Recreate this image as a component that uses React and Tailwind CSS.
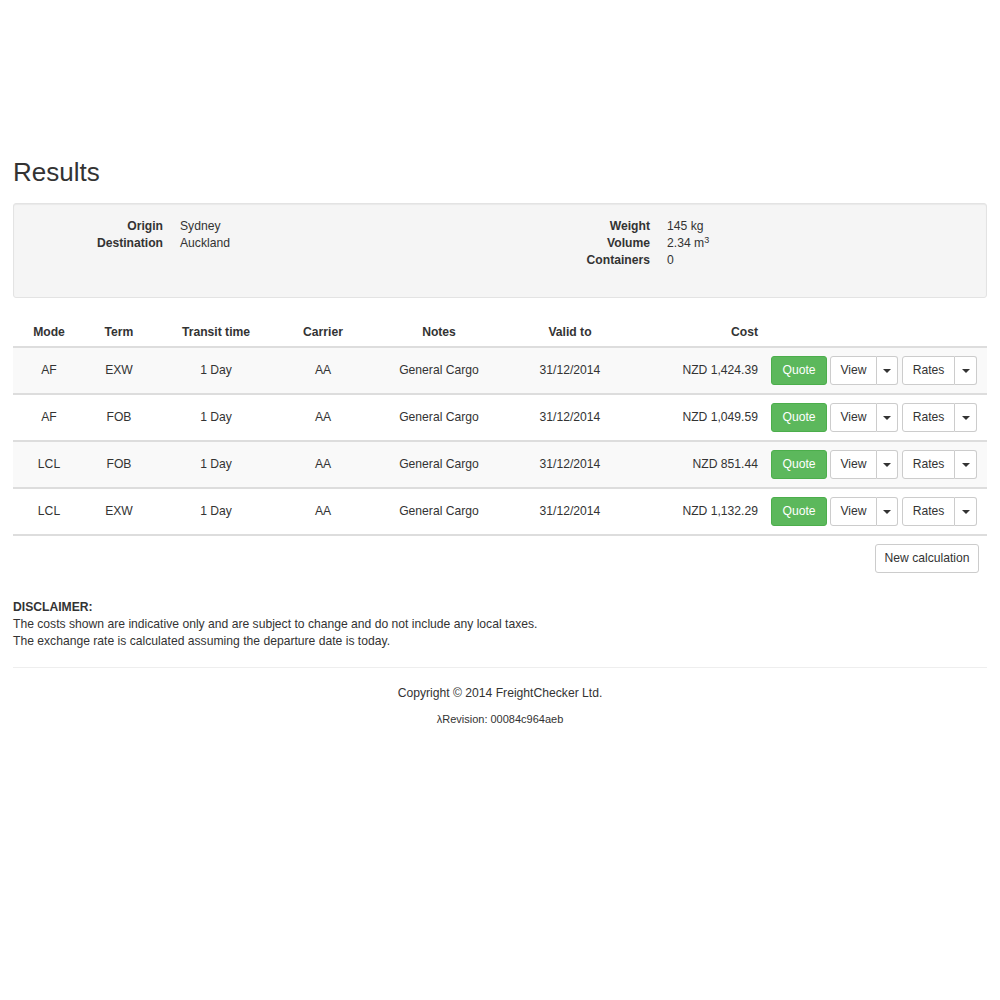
import React from "react";

const rows = [
  { mode: "AF", term: "EXW", cost: "NZD 1,424.39" },
  { mode: "AF", term: "FOB", cost: "NZD 1,049.59" },
  { mode: "LCL", term: "FOB", cost: "NZD 851.44" },
  { mode: "LCL", term: "EXW", cost: "NZD 1,132.29" },
];

const cols =
  "grid grid-cols-[72px_68px_126px_88px_144px_118px_136px_222px] items-center";

function Caret() {
  return (
    <span className="inline-block w-0 h-0 border-x-[4px] border-x-transparent border-t-[4px] border-t-[#333]" />
  );
}

function SplitButton({ label, mainW, caretW }) {
  return (
    <div className="flex h-[29px]">
      <button
        className={`${mainW} h-full bg-white border border-[#ccc] rounded-l-[3px] text-[12.15px] text-[#333]`}
      >
        {label}
      </button>
      <button
        className={`${caretW} h-full bg-white border border-l-0 border-[#ccc] rounded-r-[3px] flex items-center justify-center`}
      >
        <Caret />
      </button>
    </div>
  );
}

function InfoRow({ label, value }) {
  return (
    <div className="flex leading-[17px]">
      <div className="w-[137px] text-right font-bold">{label}</div>
      <div className="ml-[17px]">{value}</div>
    </div>
  );
}

export default function App() {
  return (
    <div className="min-h-[1000px] bg-white text-[#333] text-[12.15px] leading-[17px] font-['Liberation_Sans',Arial,sans-serif]">
      <div className="px-[13px] pt-[158px]">
        <h2 className="text-[26px] leading-[28px] font-normal mb-[17px]">Results</h2>

        <div className="bg-[#f5f5f5] border border-[#e3e3e3] rounded-[3px] shadow-[inset_0_1px_1px_rgba(0,0,0,0.05)] px-[12px] pt-[14px] pb-[28px] grid grid-cols-2 gap-[26px]">
          <div>
            <InfoRow label="Origin" value="Sydney" />
            <InfoRow label="Destination" value="Auckland" />
          </div>
          <div>
            <InfoRow label="Weight" value="145 kg" />
            <InfoRow
              label="Volume"
              value={
                <span>
                  2.34 m<sup className="text-[9px]">3</sup>
                </span>
              }
            />
            <InfoRow label="Containers" value="0" />
          </div>
        </div>

        <div className="mt-[17px]">
          <div className={`${cols} font-bold h-[33px] pt-[4px] border-b-2 border-[#ddd]`}>
            <div className="text-center">Mode</div>
            <div className="text-center">Term</div>
            <div className="text-center">Transit time</div>
            <div className="text-center">Carrier</div>
            <div className="text-center">Notes</div>
            <div className="text-center">Valid to</div>
            <div className="text-right pr-[7px]">Cost</div>
            <div />
          </div>
          {rows.map((r, i) => (
            <div
              key={i}
              className={`${cols} h-[47px] border-b-2 border-[#ddd] ${i % 2 === 0 ? "bg-[#f9f9f9]" : "bg-white"}`}
            >
              <div className="text-center">{r.mode}</div>
              <div className="text-center">{r.term}</div>
              <div className="text-center">1 Day</div>
              <div className="text-center">AA</div>
              <div className="text-center">General Cargo</div>
              <div className="text-center">31/12/2014</div>
              <div className="text-right pr-[7px]">{r.cost}</div>
              <div className="flex items-center gap-[3px] pl-[6px]">
                <button className="w-[56px] h-[29px] bg-[#5cb85c] border border-[#4cae4c] rounded-[3px] text-white text-[12.15px]">
                  Quote
                </button>
                <SplitButton label="View" mainW="w-[47px]" caretW="w-[21px]" />
                <div className="ml-[1px]">
                  <SplitButton label="Rates" mainW="w-[53px]" caretW="w-[22px]" />
                </div>
              </div>
            </div>
          ))}
          <div className="flex justify-end pr-[8px] mt-[8px]">
            <button className="w-[104px] h-[29px] bg-white border border-[#ccc] rounded-[3px] text-[12.15px] text-[#333]">
              New calculation
            </button>
          </div>
        </div>

        <div className="mt-[26px]">
          <div className="font-bold">DISCLAIMER:</div>
          <div>The costs shown are indicative only and are subject to change and do not include any local taxes.</div>
          <div>The exchange rate is calculated assuming the departure date is today.</div>
        </div>

        <hr className="mt-[17px] border-0 border-t border-[#eee]" />

        <div className="text-center mt-[17px]">Copyright © 2014 FreightChecker Ltd.</div>
        <div className="text-center mt-[10px] text-[11px] leading-[14px]">λRevision: 00084c964aeb</div>
      </div>
    </div>
  );
}
